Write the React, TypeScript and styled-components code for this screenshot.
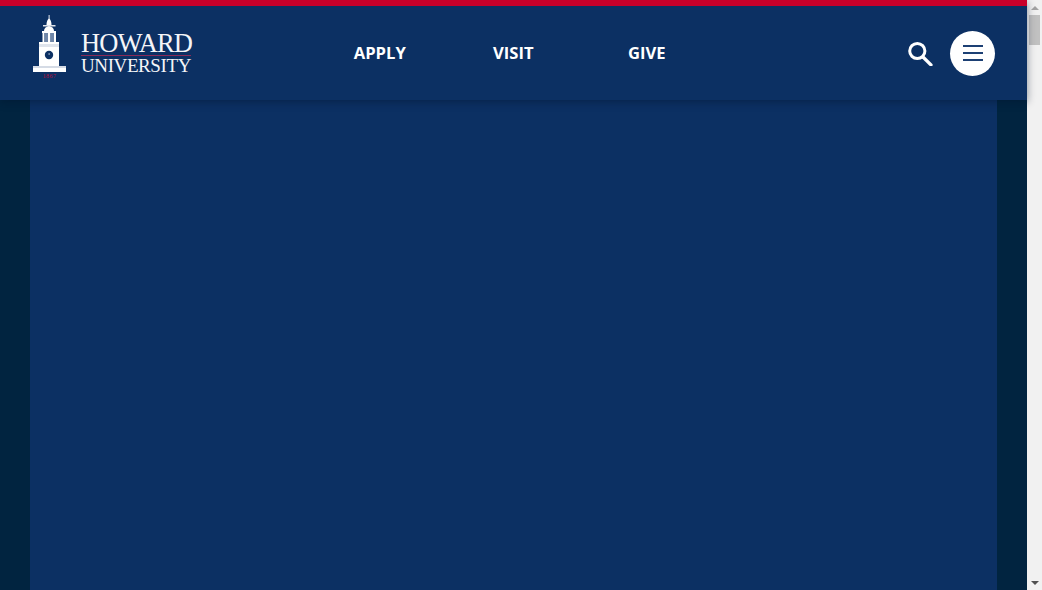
import React from 'react';
import styled, { createGlobalStyle } from 'styled-components';

const GlobalStyle = createGlobalStyle`
  html, body {
    margin: 0;
    height: 100%;
    overflow: hidden;
    background-color: #012440;
    font-family: 'Open Sans', 'Liberation Sans', sans-serif;
  }
  #root {
    height: 100%;
  }
`;

const Shell = styled.div`
  height: 100%;
  display: flex;
`;

const Page = styled.div`
  flex: 1;
  min-width: 0;
  display: flex;
  flex-direction: column;
`;

const Header = styled.header`
  position: relative;
  z-index: 1;
  height: 94px;
  flex: none;
  border-top: 6px solid #c8002a;
  background-color: #0c3063;
  box-shadow: 0 2px 8px rgba(0, 20, 45, 0.45);
  display: flex;
  align-items: center;
  padding: 0 32px 0 33px;
`;

const LogoLink = styled.a`
  width: 160px;
  height: 63px;
  margin-bottom: 13px;
  flex: none;
  display: flex;
  gap: 15px;
  color: #fff;
  text-decoration: none;
`;

const LogoWords = styled.div`
  width: 112px;
  margin-top: 16px;
  font-family: 'Liberation Serif', serif;
  color: #f4f5f8;
`;

const LogoTop = styled.div`
  font-size: 26.5px;
  line-height: 24px;
  height: 24px;
  white-space: nowrap;
  letter-spacing: -0.9px;
`;

const LogoRule = styled.div`
  height: 1px;
  width: 110px;
  background-color: #8a2a58;
`;

const LogoBottom = styled.div`
  font-size: 19px;
  line-height: 18px;
  margin-top: 1px;
  white-space: nowrap;
  letter-spacing: -0.4px;
`;

const Nav = styled.nav`
  display: grid;
  grid-template-columns: repeat(3, 133.5px);
  margin-left: 120px;
`;

const NavItem = styled.a`
  font-size: 16.6px;
  line-height: 22px;
  font-weight: 700;
  color: #fff;
  text-align: center;
  text-decoration: none;
`;

const Actions = styled.div`
  margin-left: auto;
  display: flex;
  align-items: center;
  gap: 17px;
`;

const SearchButton = styled.button`
  width: 25px;
  height: 25px;
  padding: 0;
  border: 0;
  background: none;
  display: block;
`;

const MenuButton = styled.button`
  width: 45px;
  height: 45px;
  padding: 0;
  border: 0;
  border-radius: 50%;
  background-color: #fff;
  display: flex;
  flex-direction: column;
  align-items: center;
  justify-content: center;
  gap: 5px;
`;

const MenuLine = styled.span`
  width: 20px;
  height: 2px;
  background-color: #1d4074;
`;

const Content = styled.main`
  flex: 1;
  margin: 0 30px;
  background-color: #0c3063;
`;

const ScrollTrack = styled.div`
  width: 15px;
  flex: none;
  background-color: #f1f1f1;
  display: flex;
  flex-direction: column;
  align-items: center;
`;

const ScrollArrow = styled.div<{ $down?: boolean; $color: string }>`
  width: 15px;
  height: 15px;
  flex: none;
  display: flex;
  align-items: center;
  justify-content: center;

  &::before {
    content: '';
    border-left: 4px solid transparent;
    border-right: 4px solid transparent;
    ${(p) => (p.$down ? 'border-top' : 'border-bottom')}: 4px solid ${(p) => p.$color};
  }
`;

const ScrollThumb = styled.div`
  width: 11px;
  height: 30px;
  flex: none;
  background-color: #c1c1c1;
`;

const ScrollSpacer = styled.div`
  flex: 1;
`;

function Tower() {
  return (
    <svg width="33" height="63" viewBox="0 0 33 63" aria-hidden="true">
      <rect x="15.6" y="0" width="1" height="5" fill="#e6e9ef" />
      <path d="M13.5 10 Q13.5 5 16 3.5 Q18.5 5 18.5 10 Z" fill="#fff" />
      <rect x="10" y="10" width="12.5" height="1.5" fill="#dfe3ea" />
      <path d="M11 16 Q11 12 16 11 Q21 12 21 16 Z" fill="#fff" />
      <rect x="9" y="16" width="14" height="2" fill="#fff" />
      <rect x="9.5" y="18" width="2" height="9" fill="#fff" />
      <rect x="15" y="18" width="2.5" height="9" fill="#fff" />
      <rect x="21" y="18" width="2" height="9" fill="#fff" />
      <rect x="11.5" y="18" width="3.5" height="9" fill="#6f86a8" />
      <rect x="17.5" y="18" width="3.5" height="9" fill="#6f86a8" />
      <rect x="6" y="27" width="20" height="2" fill="#fff" />
      <rect x="6" y="29" width="20" height="3" fill="#dfe4ec" />
      <rect x="6" y="32" width="20" height="20" fill="#fff" />
      <circle cx="16" cy="40" r="4.2" fill="#0c3063" />
      <rect x="15.6" y="38" width="1" height="2" fill="#9fb0c8" />
      <rect x="0" y="51" width="33" height="2" fill="#d5dbe5" />
      <rect x="0" y="53" width="33" height="4" fill="#fff" />
      <text x="16.5" y="63" textAnchor="middle" fontSize="6" letterSpacing="0.4" fontFamily="'Liberation Serif', serif" fill="#b5103c">
        1867
      </text>
    </svg>
  );
}

function SearchIcon() {
  return (
    <svg width="25" height="25" viewBox="0 0 25 25" fill="none" stroke="#fff" aria-hidden="true">
      <circle cx="9.3" cy="10" r="7.6" strokeWidth="3" />
      <path d="M15 16 L23 24" strokeWidth="3.2" strokeLinecap="round" />
    </svg>
  );
}

export default function App() {
  return (
    <>
      <GlobalStyle />
      <Shell>
        <Page>
          <Header>
            <LogoLink href="#home">
              <Tower />
              <LogoWords>
                <LogoTop>HOWARD</LogoTop>
                <LogoRule />
                <LogoBottom>UNIVERSITY</LogoBottom>
              </LogoWords>
            </LogoLink>
            <Nav>
              <NavItem href="#apply">APPLY</NavItem>
              <NavItem href="#visit">VISIT</NavItem>
              <NavItem href="#give">GIVE</NavItem>
            </Nav>
            <Actions>
              <SearchButton aria-label="Search">
                <SearchIcon />
              </SearchButton>
              <MenuButton aria-label="Menu">
                <MenuLine />
                <MenuLine />
                <MenuLine />
              </MenuButton>
            </Actions>
          </Header>
          <Content />
        </Page>
        <ScrollTrack>
          <ScrollArrow $color="#a3a3a3" />
          <ScrollThumb />
          <ScrollSpacer />
          <ScrollArrow $down $color="#505050" />
        </ScrollTrack>
      </Shell>
    </>
  );
}
